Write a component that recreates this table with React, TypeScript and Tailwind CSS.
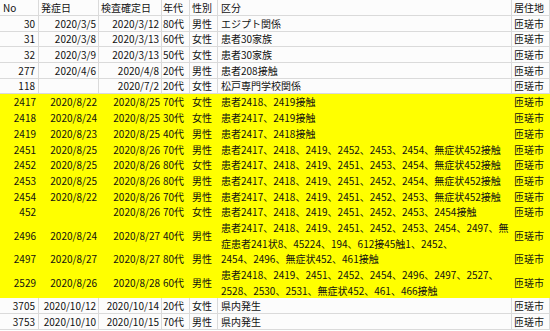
import * as React from 'react';

type Row = {
  no: string;
  onset: string;
  confirmed: string;
  age: string;
  sex: string;
  lines: string[];
  city: string;
  yellow?: boolean;
};

const rows: Row[] = [
  { no: '30', onset: '2020/3/5', confirmed: '2020/3/12', age: '80代', sex: '男性', lines: ['エジプト関係'], city: '匝瑳市' },
  { no: '31', onset: '2020/3/8', confirmed: '2020/3/13', age: '60代', sex: '女性', lines: ['患者30家族'], city: '匝瑳市' },
  { no: '32', onset: '2020/3/9', confirmed: '2020/3/13', age: '50代', sex: '女性', lines: ['患者30家族'], city: '匝瑳市' },
  { no: '277', onset: '2020/4/6', confirmed: '2020/4/8', age: '20代', sex: '男性', lines: ['患者208接触'], city: '匝瑳市' },
  { no: '118', onset: '', confirmed: '2020/7/2', age: '20代', sex: '女性', lines: ['松戸専門学校関係'], city: '匝瑳市' },
  { no: '2417', onset: '2020/8/22', confirmed: '2020/8/25', age: '70代', sex: '女性', lines: ['患者2418、2419接触'], city: '匝瑳市', yellow: true },
  { no: '2418', onset: '2020/8/24', confirmed: '2020/8/25', age: '30代', sex: '女性', lines: ['患者2417、2419接触'], city: '匝瑳市', yellow: true },
  { no: '2419', onset: '2020/8/23', confirmed: '2020/8/25', age: '40代', sex: '男性', lines: ['患者2417、2418接触'], city: '匝瑳市', yellow: true },
  { no: '2451', onset: '2020/8/25', confirmed: '2020/8/26', age: '70代', sex: '男性', lines: ['患者2417、2418、2419、2452、2453、2454、無症状452接触'], city: '匝瑳市', yellow: true },
  { no: '2452', onset: '2020/8/25', confirmed: '2020/8/26', age: '80代', sex: '女性', lines: ['患者2417、2418、2419、2451、2453、2454、無症状452接触'], city: '匝瑳市', yellow: true },
  { no: '2453', onset: '2020/8/25', confirmed: '2020/8/26', age: '80代', sex: '男性', lines: ['患者2417、2418、2419、2451、2452、2454、無症状452接触'], city: '匝瑳市', yellow: true },
  { no: '2454', onset: '2020/8/22', confirmed: '2020/8/26', age: '70代', sex: '男性', lines: ['患者2417、2418、2419、2451、2452、2453、無症状452接触'], city: '匝瑳市', yellow: true },
  { no: '452', onset: '', confirmed: '2020/8/26', age: '70代', sex: '女性', lines: ['患者2417、2418、2419、2451、2452、2453、2454接触'], city: '匝瑳市', yellow: true },
  {
    no: '2496', onset: '2020/8/24', confirmed: '2020/8/27', age: '40代', sex: '男性',
    lines: ['患者2417、2418、2419、2451、2452、2453、2454、2497、無', '症患者241状8、45224、194、612接45触1、2452、'],
    city: '匝瑳市', yellow: true,
  },
  { no: '2497', onset: '2020/8/27', confirmed: '2020/8/27', age: '80代', sex: '男性', lines: ['2454、2496、無症状452、461接触'], city: '匝瑳市', yellow: true },
  {
    no: '2529', onset: '2020/8/26', confirmed: '2020/8/28', age: '60代', sex: '男性',
    lines: ['患者2418、2419、2451、2452、2454、2496、2497、2527、', '2528、2530、2531、無症状452、461、466接触'],
    city: '匝瑳市', yellow: true,
  },
  { no: '3705', onset: '2020/10/12', confirmed: '2020/10/14', age: '20代', sex: '女性', lines: ['県内発生'], city: '匝瑳市' },
  { no: '3753', onset: '2020/10/10', confirmed: '2020/10/15', age: '70代', sex: '男性', lines: ['県内発生'], city: '匝瑳市' },
];

const cols = 'grid grid-cols-[39px_60px_63px_28px_28px_294px_38px]';

function Cell({ yellow, className, children }: { yellow?: boolean; className?: string; children?: React.ReactNode }) {
  return (
    <div
      className={`flex items-center whitespace-nowrap overflow-hidden ${
        yellow ? 'bg-[#ffff00]' : 'bg-[#fcfcfc] border-r border-b border-[#dadada]'
      } ${className ?? ''}`}
    >
      {children}
    </div>
  );
}

export default function App() {
  return (
    <div className="w-[550px] h-[331px] overflow-hidden bg-white font-['Noto_Sans_CJK_JP','Liberation_Sans',sans-serif] text-[10px] leading-[15.7px] text-[#111]">
      {/* header */}
      <div className={`${cols} h-[16px]`}>
        <Cell className="pl-[3px]">No</Cell>
        <Cell className="pl-[2px]">発症日</Cell>
        <Cell className="pl-[2px]">検査確定日</Cell>
        <Cell className="pl-[1px]">年代</Cell>
        <Cell className="pl-[2px]">性別</Cell>
        <Cell className="pl-[3px]">区分</Cell>
        <Cell className="pl-[2px]">居住地</Cell>
      </div>

      {rows.map((r) => (
        <div key={r.no} className={`${cols} ${r.lines.length > 1 ? 'h-[31.4px]' : 'h-[15.7px]'}`}>
          <Cell yellow={r.yellow} className="justify-end pr-[3px]">{r.no}</Cell>
          <Cell yellow={r.yellow} className="justify-end pr-[2px]">{r.onset}</Cell>
          <Cell yellow={r.yellow} className="justify-end pr-[2px]">{r.confirmed}</Cell>
          <Cell yellow={r.yellow} className="pl-[1px]">{r.age}</Cell>
          <Cell yellow={r.yellow} className="pl-[2px]">{r.sex}</Cell>
          <Cell yellow={r.yellow} className="pl-[3px]">
            <div className="flex flex-col">
              {r.lines.map((l) => (
                <span key={l}>{l}</span>
              ))}
            </div>
          </Cell>
          <Cell yellow={r.yellow} className="pl-[2px]">{r.city}</Cell>
        </div>
      ))}
    </div>
  );
}
